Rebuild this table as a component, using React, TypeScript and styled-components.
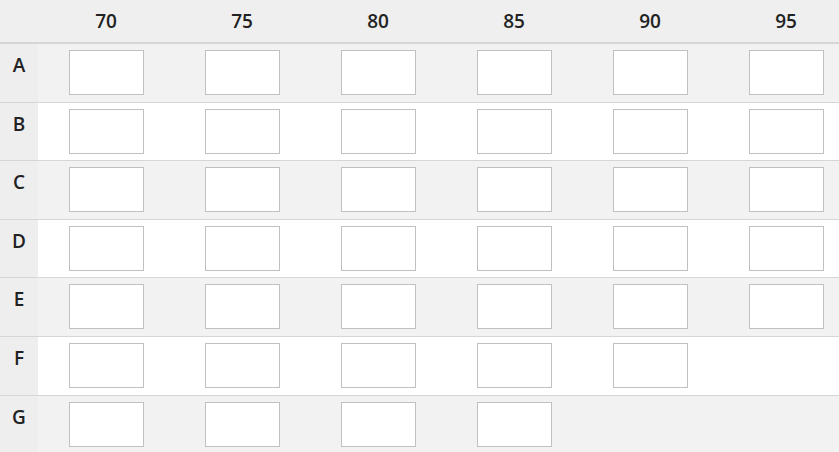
import React from 'react'
import styled, { createGlobalStyle } from 'styled-components'

const GlobalStyle = createGlobalStyle`
  html, body {
    margin: 0;
    padding: 0;
    background: #ffffff;
    overflow: hidden;
  }
  body {
    font-family: "Open Sans", "Liberation Sans", sans-serif;
    color: #222222;
  }
`

const Grid = styled.table`
  border-collapse: collapse;
  table-layout: fixed;
  width: 854px;
`

const HeadCell = styled.th`
  height: 42px;
  padding: 0;
  background: #efefef;
  border-bottom: 2px solid #d6d6d6;
  font-size: 19px;
  font-weight: 600;
  text-align: center;
  vertical-align: middle;
  width: 136px;
`

const CornerCell = styled(HeadCell)`
  width: 38px;
`

const Row = styled.tr<{ $shade: boolean }>`
  background: ${p => (p.$shade ? '#f2f2f2' : '#ffffff')};
  border-bottom: 1px solid #d6d6d6;
  &:last-child {
    border-bottom: none;
  }
`

const RowLabel = styled.th`
  width: 38px;
  padding: 8px 0 0 0;
  background: #eeeeee;
  font-size: 19px;
  font-weight: 600;
  text-align: center;
  vertical-align: top;
`

const Cell = styled.td`
  padding: 6px 0 6.6px 0;
  text-align: center;
  vertical-align: top;
`

const Entry = styled.input`
  display: block;
  box-sizing: border-box;
  margin: 0 auto;
  width: 75px;
  height: 45px;
  border: 1px solid #c0c0c0;
  border-radius: 0;
  background: #ffffff;
  padding: 0;
  outline: none;
`

const columns = [70, 75, 80, 85, 90, 95]

const rows: { label: string; count: number }[] = [
  { label: 'A', count: 6 },
  { label: 'B', count: 6 },
  { label: 'C', count: 6 },
  { label: 'D', count: 6 },
  { label: 'E', count: 6 },
  { label: 'F', count: 5 },
  { label: 'G', count: 4 },
]

export default function App() {
  return (
    <>
      <GlobalStyle />
      <Grid>
        <thead>
          <tr>
            <CornerCell />
            {columns.map(c => (
              <HeadCell key={c}>{c}</HeadCell>
            ))}
          </tr>
        </thead>
        <tbody>
          {rows.map((r, i) => (
            <Row key={r.label} $shade={i % 2 === 0}>
              <RowLabel>{r.label}</RowLabel>
              {columns.map((c, j) => (
                <Cell key={c}>{j < r.count ? <Entry type="text" /> : null}</Cell>
              ))}
            </Row>
          ))}
        </tbody>
      </Grid>
    </>
  )
}
